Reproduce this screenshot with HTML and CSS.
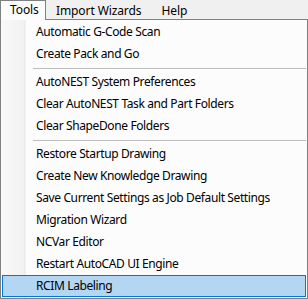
FILE: index.html
```html
<!DOCTYPE html>
<html lang="en">
<head>
  <meta charset="UTF-8" />
  <title>Tools menu</title>
  <link rel="stylesheet" href="styles.css">
</head>
<body>
  <div class="menubar">
    <div class="menubar-item open">Tools</div>
    <div class="menubar-item">Import Wizards</div>
    <div class="menubar-item">Help</div>
  </div>

  <div class="dropdown">
    <div class="item">Automatic G-Code Scan</div>
    <div class="item">Create Pack and Go</div>
    <div class="separator"></div>
    <div class="item">AutoNEST System Preferences</div>
    <div class="item">Clear AutoNEST Task and Part Folders</div>
    <div class="item">Clear ShapeDone Folders</div>
    <div class="separator"></div>
    <div class="item">Restore Startup Drawing</div>
    <div class="item">Create New Knowledge Drawing</div>
    <div class="item">Save Current Settings as Job Default Settings</div>
    <div class="item">Migration Wizard</div>
    <div class="item">NCVar Editor</div>
    <div class="item">Restart AutoCAD UI Engine</div>
    <div class="item selected">RCIM Labeling</div>
  </div>
</body>
</html>
```

FILE: styles.css
```css
body {
  margin: 0;
  background: #f0f0f0;
  font-family: "Noto Sans", "Open Sans", sans-serif;
  font-size: 12px;
  letter-spacing: -0.38px;
  color: #000;
}

.menubar {
  display: flex;
  height: 19px;
  background: #f0f0f0;
  letter-spacing: -0.1px;
}

.menubar-item {
  padding: 0 9px;
  line-height: 19px;
  border: 1px solid transparent;
  border-bottom: none;
}

.menubar-item.open {
  position: relative;
  z-index: 1;
  box-sizing: border-box;
  width: 46px;
  height: 20px;
  line-height: 18px;
  margin-bottom: -1px;
  border-color: #808080;
  background: #fcfcfc;
}

.dropdown {
  box-sizing: border-box;
  height: 280px;
  padding: 1px;
  border: 1px solid #808080;
  background: linear-gradient(to right, #f9f9f9 0, #f1f1f1 23px, #e6e6e6 24px, #fcfcfc 25px, #fcfcfc 100%);
}

.item {
  box-sizing: border-box;
  height: 22px;
  line-height: 21px;
  padding-left: 34px;
  white-space: nowrap;
}

.item.selected {
  background: #b3d7f3;
  border: 1px solid #0078d7;
  padding-left: 33px;
  line-height: 19px;
}

.separator {
  height: 1px;
  margin: 3px 0 2px 31px;
  background: #bdbdbd;
}
```
